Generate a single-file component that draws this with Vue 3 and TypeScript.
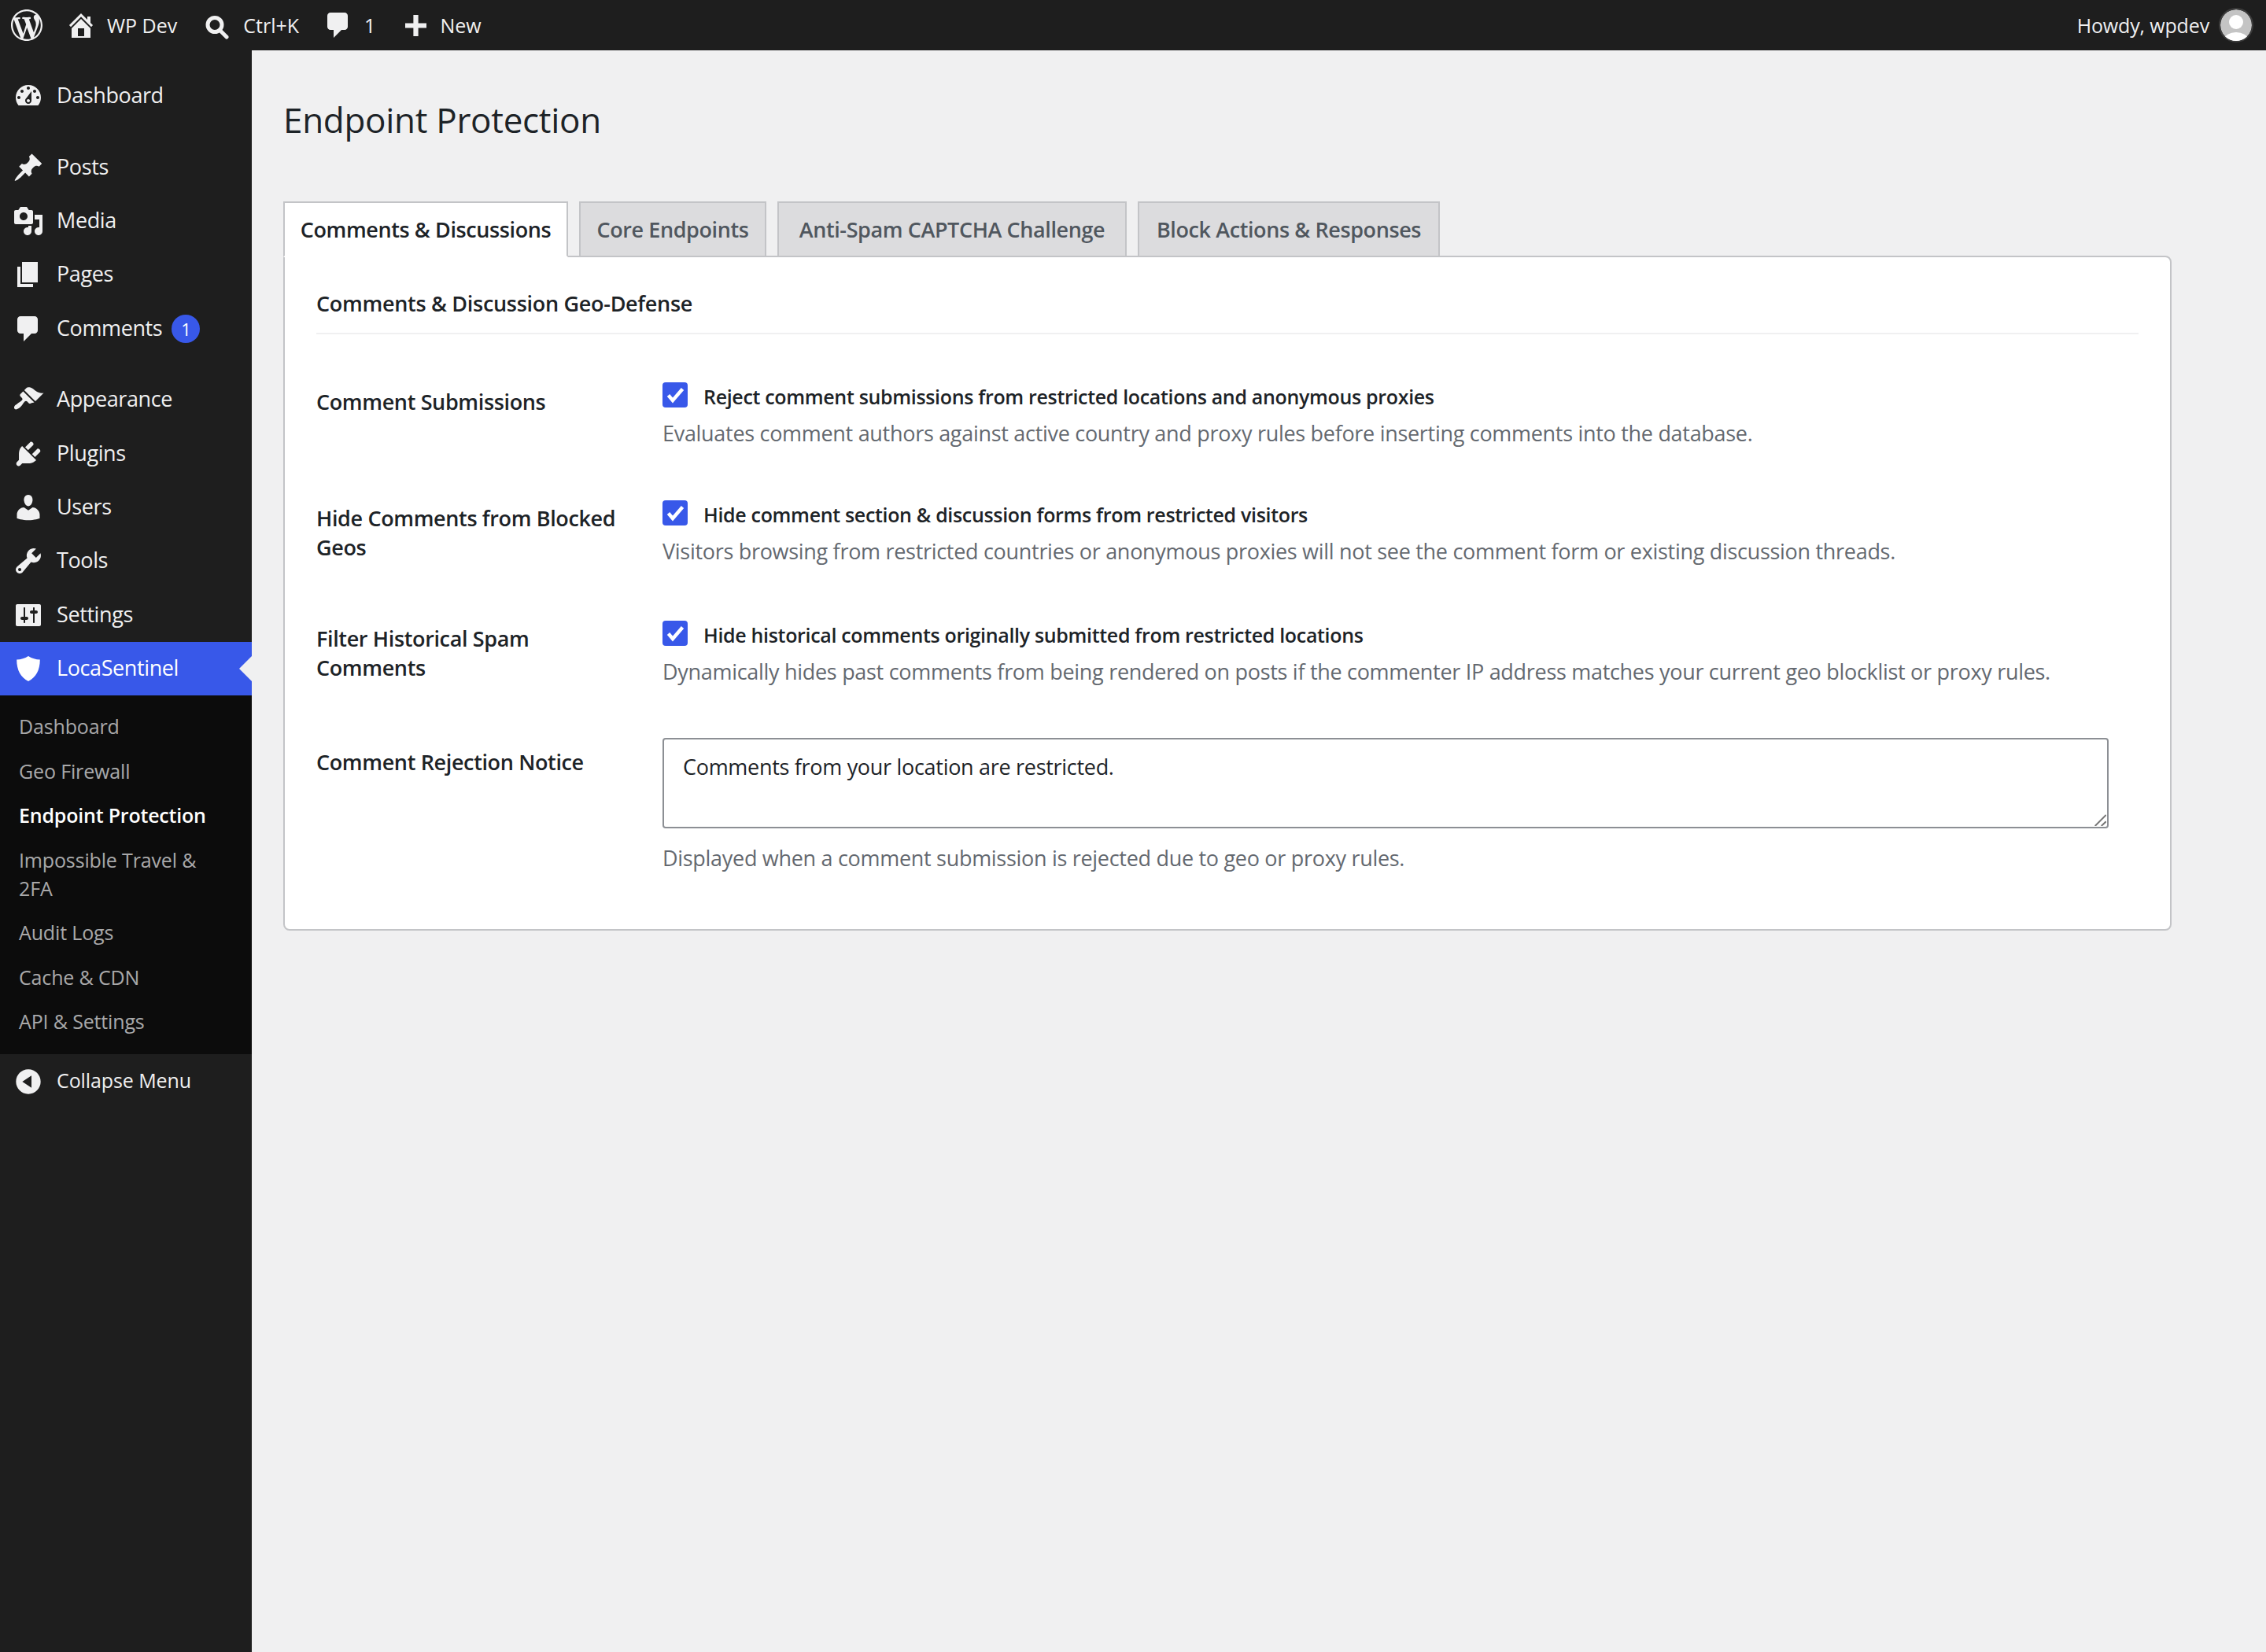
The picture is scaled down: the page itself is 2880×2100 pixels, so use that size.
<script setup lang="ts">
// WP admin screen: LocaSentinel "Endpoint Protection" settings page.
// Everything is doubled from the usual admin sizes (2x capture).

interface MenuItem {
  label: string
  icon: string
  gapBefore?: boolean
  badge?: string
  active?: boolean
}

const ICONS: Record<string, string> = {
  wp: 'M20 10c0-5.51-4.49-10-10-10C4.48 0 0 4.49 0 10c0 5.52 4.48 10 10 10 5.51 0 10-4.48 10-10zM7.78 15.37L4.37 6.22c.55-.02 1.17-.08 1.17-.08.5-.06.44-1.13-.06-1.11 0 0-1.45.11-2.37.11-.18 0-.37 0-.58-.01C4.12 2.69 6.87 1.11 10 1.11c2.33 0 4.45.87 6.05 2.34-.68-.11-1.65.39-1.65 1.58 0 .74.45 1.36.9 2.1.35.61.55 1.36.55 2.46 0 1.49-1.4 5-1.4 5l-3.03-8.37c.54-.02.82-.17.82-.17.5-.05.44-1.25-.06-1.22 0 0-1.44.12-2.38.12-.87 0-2.33-.12-2.33-.12-.5-.03-.56 1.2-.06 1.22l.92.08 1.26 3.41zM17.41 10c.24-.64.74-1.87.43-4.25.7 1.29 1.05 2.71 1.05 4.25 0 3.29-1.73 6.24-4.4 7.78.97-2.59 1.94-5.2 2.92-7.78zM6.1 18.09C3.12 16.65 1.11 13.53 1.11 10c0-1.3.23-2.48.72-3.59C3.25 10.3 4.67 14.2 6.1 18.09zm4.03-6.63l2.58 6.98c-.86.29-1.76.45-2.71.45-.79 0-1.57-.11-2.29-.33.81-2.38 1.62-4.74 2.42-7.1z',
  home: 'M16 8.5l1.53 1.53-1.06 1.06L10 4.62l-6.47 6.47-1.06-1.06L10 2.5l4 4v-2h2v4zm-6-2.46l6 5.99V18H4v-5.97zM12 17v-5H8v5h4z',
  plus: 'M17 7v3h-5v5H9v-5H4V7h5V2h3v5h5z',
  dashboard: 'M3.76 16h12.48c1.1-1.37 1.76-3.11 1.76-5 0-4.42-3.58-8-8-8s-8 3.58-8 8c0 1.89.66 3.63 1.76 5zM10 4c.55 0 1 .45 1 1s-.45 1-1 1-1-.45-1-1 .45-1 1-1zM6 6c.55 0 1 .45 1 1s-.45 1-1 1-1-.45-1-1 .45-1 1-1zm8 0c.55 0 1 .45 1 1s-.45 1-1 1-1-.45-1-1 .45-1 1-1zm-5.37 5.55L12 7v6c0 1.1-.9 2-2 2s-2-.9-2-2c0-.57.24-1.08.63-1.45zM4 10c.55 0 1 .45 1 1s-.45 1-1 1-1-.45-1-1 .45-1 1-1zm12 0c.55 0 1 .45 1 1s-.45 1-1 1-1-.45-1-1 .45-1 1-1zm-5 3c0-.55-.45-1-1-1s-1 .45-1 1 .45 1 1 1 1-.45 1-1z',
  posts: 'M10.44 3.02l1.82-1.82 6.36 6.35-1.83 1.82c-1.05-.68-2.48-.57-3.41.36l-.75.75c-.92.93-1.04 2.35-.35 3.41l-1.83 1.82-2.41-2.41-2.8 2.79c-.42.42-3.38 2.71-3.8 2.29s1.86-3.39 2.28-3.81l2.79-2.79L4.1 9.36l1.83-1.82c1.05.69 2.48.57 3.4-.36l.75-.75c.93-.92 1.05-2.35.36-3.41z',
  media: 'M13 11V4c0-.55-.45-1-1-1h-1.67L9 1H5L3.67 3H2c-.55 0-1 .45-1 1v7c0 .55.45 1 1 1h10c.55 0 1-.45 1-1zM7 4.5c1.38 0 2.5 1.12 2.5 2.5S8.38 9.5 7 9.5 4.5 8.38 4.5 7 5.62 4.5 7 4.5zM14 6h5v10.5c0 1.38-1.12 2.5-2.5 2.5S14 17.88 14 16.5s1.12-2.5 2.5-2.5c.17 0 .34.02.5.05V9h-3V6zm-4 8.05V13h2v3.5c0 1.38-1.12 2.5-2.5 2.5S7 17.88 7 16.5 8.12 14 9.5 14c.17 0 .34.02.5.05z',
  pages: 'M6 15V2h10v13H6zm-1 1h8v2H3V5h2v11z',
  comments: 'M5 2h9c1.1 0 2 .9 2 2v7c0 1.1-.9 2-2 2h-2l-5 5v-5H5c-1.1 0-2-.9-2-2V4c0-1.1.9-2 2-2z',
  appearance: 'M14.48 11.06L7.41 3.99l1.5-1.5c.5-.56 2.3-.47 3.51.32 1.21.8 1.43 1.28 2.91 2.1 1.18.64 2.45 1.26 4.45.85zm-.71.71L6.7 4.7 4.93 6.47c-.39.39-.39 1.02 0 1.41l1.06 1.06c.39.39.39 1.03 0 1.42-.6.6-1.43 1.11-2.21 1.69-.35.26-.7.53-1.01.84C1.43 13.23.4 14.95 1.3 15.85c.9.9 2.62-.13 3.97-1.47.31-.31.58-.66.84-1.01.58-.78 1.09-1.61 1.69-2.21.39-.39 1.02-.39 1.41 0l1.06 1.06c.39.39 1.02.39 1.41 0z',
  plugins: 'M13.11 4.36L9.87 7.6 8 5.73l3.24-3.24c.35-.34 1.05-.2 1.56.32.52.51.66 1.21.31 1.55zm-8 1.77l.91-1.12 9.01 9.01-1.19.84c-.71.71-2.63 1.16-3.82 1.16H6.14L4.9 17.26c-.59.59-1.54.59-2.12 0-.59-.58-.59-1.53 0-2.12l1.24-1.24v-3.88c0-1.13.4-3.19 1.09-3.89zm7.26 3.97l3.24-3.24c.34-.35 1.04-.21 1.55.31.52.51.66 1.21.31 1.55l-3.24 3.25z',
  users: 'M10 9.25c-2.27 0-2.73-3.44-2.73-3.44C7 4.02 7.82 2 9.97 2c2.16 0 2.98 2.02 2.71 3.81 0 0-.41 3.44-2.68 3.44zm0 2.57L12.72 10c2.39 0 4.52 2.33 4.52 4.53v2.49s-3.65 1.13-7.24 1.13c-3.65 0-7.24-1.13-7.24-1.13v-2.49c0-2.25 1.94-4.48 4.47-4.48z',
  tools: 'M16.68 9.77c-1.34 1.34-3.3 1.67-4.95.99l-5.41 6.52c-.99.99-2.59.99-3.58 0s-.99-2.59 0-3.57l6.52-5.42c-.68-1.65-.35-3.61.99-4.95 1.28-1.28 3.12-1.62 4.72-1.06l-2.89 2.89 2.82 2.82 2.86-2.87c.53 1.58.18 3.39-1.08 4.65zM3.81 16.21c.4.39 1.04.39 1.43 0 .4-.4.4-1.04 0-1.43-.39-.4-1.03-.4-1.43 0-.39.39-.39 1.03 0 1.43z',
  settings: 'M18 16V4c0-.55-.45-1-1-1H3c-.55 0-1 .45-1 1v12c0 .55.45 1 1 1h14c.55 0 1-.45 1-1zM8 11h1c.55 0 1 .45 1 1s-.45 1-1 1H8v1.5c0 .28-.22.5-.5.5s-.5-.22-.5-.5V13H6c-.55 0-1-.45-1-1s.45-1 1-1h1V5.5c0-.28.22-.5.5-.5s.5.22.5.5V11zm5-2h-1c-.55 0-1-.45-1-1s.45-1 1-1h1V5.5c0-.28.22-.5.5-.5s.5.22.5.5V7h1c.55 0 1 .45 1 1s-.45 1-1 1h-1v5.5c0 .28-.22.5-.5.5s-.5-.22-.5-.5V9z',
  shield: 'M10 2c2.2 1.5 4.8 2.2 7.4 2.3 0 6.8-2.6 11.4-7.4 13.7C5.2 15.7 2.6 11.1 2.6 4.3 5.2 4.2 7.8 3.5 10 2z',
  collapse: 'M10 2.16c4.33 0 7.84 3.51 7.84 7.84s-3.51 7.84-7.84 7.84S2.16 14.33 2.16 10 5.71 2.16 10 2.16zm2 11.72V6.12L6.18 9.97z',
}

const menu: MenuItem[] = [
  { label: 'Dashboard', icon: 'dashboard' },
  { label: 'Posts', icon: 'posts', gapBefore: true },
  { label: 'Media', icon: 'media' },
  { label: 'Pages', icon: 'pages' },
  { label: 'Comments', icon: 'comments', badge: '1' },
  { label: 'Appearance', icon: 'appearance', gapBefore: true },
  { label: 'Plugins', icon: 'plugins' },
  { label: 'Users', icon: 'users' },
  { label: 'Tools', icon: 'tools' },
  { label: 'Settings', icon: 'settings' },
  { label: 'LocaSentinel', icon: 'shield', active: true },
]

const subMenu = [
  { label: 'Dashboard' },
  { label: 'Geo Firewall' },
  { label: 'Endpoint Protection', current: true },
  { label: 'Impossible Travel & 2FA' },
  { label: 'Audit Logs' },
  { label: 'Cache & CDN' },
  { label: 'API & Settings' },
]

// widths fixed per tab: the substitute font runs a little narrow on the capitals
const tabs = [
  { label: 'Comments & Discussions', width: 362 },
  { label: 'Core Endpoints', width: 238 },
  { label: 'Anti-Spam CAPTCHA Challenge', width: 444 },
  { label: 'Block Actions & Responses', width: 384 },
]

const checkRows = [
  {
    label: 'Comment Submissions',
    check: 'Reject comment submissions from restricted locations and anonymous proxies',
    desc: 'Evaluates comment authors against active country and proxy rules before inserting comments into the database.',
    labelTop: 6,
    gapBelow: 37,
  },
  {
    label: 'Hide Comments from Blocked Geos',
    check: 'Hide comment section & discussion forms from restricted visitors',
    desc: 'Visitors browsing from restricted countries or anonymous proxies will not see the comment form or existing discussion threads.',
    labelTop: 4,
    gapBelow: 40,
  },
  {
    label: 'Filter Historical Spam Comments',
    check: 'Hide historical comments originally submitted from restricted locations',
    desc: 'Dynamically hides past comments from being rendered on posts if the commenter IP address matches your current geo blocklist or proxy rules.',
    labelTop: 4,
    gapBelow: 36,
  },
]
</script>

<template>
  <div class="admin">
    <header class="bar">
      <svg class="bar-logo" viewBox="0 0 20 20"><path :d="ICONS.wp" /></svg>
      <svg class="bar-home" viewBox="0 0 20 20"><path :d="ICONS.home" /></svg>
      <span class="bar-site">WP Dev</span>
      <svg class="bar-search" viewBox="0 0 30 36">
        <circle cx="12" cy="17.5" r="9" fill="none" stroke="#f0f0f1" stroke-width="5" />
        <path d="M19 25l8 8" fill="none" stroke="#f0f0f1" stroke-width="5" stroke-linecap="round" />
      </svg>
      <span class="bar-keys">Ctrl+K</span>
      <svg class="bar-comment" viewBox="0 0 20 20"><path :d="ICONS.comments" /></svg>
      <span class="bar-count">1</span>
      <svg class="bar-plus" viewBox="4 2 13 13"><path :d="ICONS.plus" /></svg>
      <span class="bar-new">New</span>
      <span class="bar-howdy">Howdy, wpdev</span>
      <span class="bar-avatar">
        <svg viewBox="0 0 40 40">
          <circle cx="20" cy="20" r="20" fill="#c4c4c4" />
          <circle cx="20" cy="16" r="9" fill="#fff" />
          <ellipse cx="20" cy="38" rx="15" ry="9" fill="#fff" />
        </svg>
      </span>
    </header>

    <div class="body">
      <nav class="side">
        <template v-for="item in menu" :key="item.label">
          <div class="menu-item" :class="{ 'menu-gap': item.gapBefore, 'menu-active': item.active }">
            <svg class="menu-icon" viewBox="0 0 20 20"><path :d="ICONS[item.icon]" /></svg>
            <span class="menu-text">{{ item.label }}</span>
            <span v-if="item.badge" class="menu-badge">{{ item.badge }}</span>
          </div>
        </template>
        <ul class="sub">
          <li v-for="s in subMenu" :key="s.label" :class="{ 'sub-current': s.current }">{{ s.label }}</li>
        </ul>
        <div class="menu-item collapse">
          <svg class="menu-icon" viewBox="0 0 20 20"><path :d="ICONS.collapse" /></svg>
          <span class="menu-text">Collapse Menu</span>
        </div>
      </nav>

      <main class="main">
        <h1 class="title">Endpoint Protection</h1>
        <div class="tabs">
          <div
            v-for="(t, i) in tabs"
            :key="t.label"
            class="tab"
            :class="{ 'tab-active': i === 0 }"
            :style="{ width: t.width + 'px' }"
          >
            {{ t.label }}
          </div>
        </div>
        <section class="panel">
          <h2 class="panel-title">Comments &amp; Discussion Geo-Defense</h2>

          <div v-for="r in checkRows" :key="r.label" class="row" :style="{ paddingBottom: r.gapBelow + 'px' }">
            <div class="row-label" :style="{ paddingTop: r.labelTop + 'px' }">{{ r.label }}</div>
            <div class="row-field">
              <div class="check-line">
                <span class="check">
                  <svg viewBox="0 0 32 32"><path d="M7.5 16.5l5.5 6.5L25.5 8.5" fill="none" stroke="#fff" stroke-width="4.4" /></svg>
                </span>
                <span class="check-text">{{ r.check }}</span>
              </div>
              <p class="desc">{{ r.desc }}</p>
            </div>
          </div>

          <div class="row row-last">
            <div class="row-label notice-label">Comment Rejection Notice</div>
            <div class="row-field">
              <div class="notice-box">
                <textarea class="notice" readonly>Comments from your location are restricted.</textarea>
                <svg class="grip" viewBox="0 0 18 18">
                  <path d="M3.7 18L17.7 4M11.7 18l6-5.7" fill="none" stroke="#777" stroke-width="2" />
                </svg>
              </div>
              <p class="desc notice-desc">Displayed when a comment submission is rejected due to geo or proxy rules.</p>
            </div>
          </div>
        </section>
      </main>
    </div>
  </div>
</template>

<style scoped>
.admin {
  width: 2880px;
  height: 2100px;
  overflow: hidden;
  display: flex;
  flex-direction: column;
  background: #f0f0f1;
  color: #1d2327;
  font-family: 'Open Sans', 'Noto Sans', sans-serif;
  font-size: 27px;
  letter-spacing: -0.3px;
}

/* top bar */
.bar {
  height: 64px;
  flex: none;
  display: flex;
  align-items: center;
  background: #1e1e1e;
  color: #f0f0f1;
  font-size: 25px;
  letter-spacing: 0;
  padding: 0 16px 0 14px;
}
.bar svg {
  display: block;
  fill: #f0f0f1;
  flex: none;
}
.bar-logo {
  width: 40px;
  height: 40px;
}
.bar-home {
  width: 40px;
  height: 40px;
  margin-left: 29px;
}
.bar-site {
  margin-left: 13px;
}
.bar-search {
  width: 30px;
  height: 36px;
  margin-left: 36px;
}
.bar-keys {
  margin-left: 18px;
}
.bar-comment {
  width: 40px;
  height: 40px;
  margin-left: 30px;
}
.bar-count {
  margin-left: 13px;
}
.bar-plus {
  width: 27px;
  height: 27px;
  margin-left: 38px;
}
.bar-new {
  margin-left: 17px;
}
.bar-howdy {
  margin-left: auto;
  letter-spacing: -0.15px;
}
.bar-avatar {
  width: 44px;
  height: 44px;
  margin-left: 12px;
  border: 2px solid #3c3c3c;
  border-radius: 50%;
  box-sizing: border-box;
  overflow: hidden;
}

.body {
  flex: 1;
  display: flex;
  min-height: 0;
}

/* left menu */
.side {
  width: 320px;
  flex: none;
  background: #1e1e1e;
  color: #f0f0f1;
  padding-top: 24px;
}
.menu-item {
  position: relative;
  display: flex;
  align-items: center;
  height: 68.4px;
  padding-left: 16px;
  box-sizing: border-box;
}
.menu-gap {
  margin-top: 22px;
}
.menu-icon {
  width: 40px;
  height: 40px;
  flex: none;
  margin-right: 16px;
  fill: #f0f0f1;
}
.menu-text {
  padding-bottom: 3px;
  letter-spacing: -0.4px;
}
.menu-badge {
  width: 36px;
  height: 36px;
  margin-left: 12px;
  border-radius: 50%;
  background: #3858e9;
  color: #fff;
  font-size: 22px;
  line-height: 36px;
  text-align: center;
}
.menu-active {
  background: #3858e9;
  color: #fff;
}
.menu-active .menu-icon {
  fill: #fff;
}
.menu-active::after {
  content: '';
  position: absolute;
  right: 0;
  top: 18px;
  border: 16px solid transparent;
  border-left-width: 0;
  border-right-color: #f0f0f1;
}
.sub {
  list-style: none;
  margin: 0;
  padding: 11px 0 13px;
  background: #0c0c0c;
  color: rgba(240, 240, 241, 0.7);
  font-size: 25px;
  letter-spacing: -0.15px;
  line-height: 36.4px;
}
.sub li {
  padding: 10px 44px 10px 24px;
}
.sub-current {
  color: #fff;
  font-weight: 600;
  letter-spacing: -0.2px;
}
.collapse {
  height: 70px;
  font-size: 25px;
}
.collapse .menu-text {
  letter-spacing: -0.1px;
}

/* page */
.main {
  flex: 1;
  min-width: 0;
  padding: 58px 0 0 40px;
}
.title {
  margin: 0 0 74px;
  font-size: 44px;
  font-weight: 400;
  line-height: 60px;
}
.tabs {
  display: flex;
  gap: 14px;
  width: 2400px;
  margin-bottom: -2px;
  position: relative;
}
.tab {
  height: 71px;
  box-sizing: border-box;
  border: 2px solid #c3c4c7;
  background: #dcdcde;
  color: #50575e;
  font-weight: 600;
  letter-spacing: -0.4px;
  line-height: 68px;
  text-align: center;
  white-space: nowrap;
}
.tab-active {
  background: #fff;
  color: #1d2327;
  border-bottom-color: #fff;
}
.panel {
  width: 2400px;
  box-sizing: border-box;
  background: #fff;
  border: 2px solid #c3c4c7;
  border-radius: 0 8px 8px 8px;
  padding: 40px 40px 42px;
}
.panel-title {
  margin: 0 0 31px;
  padding-bottom: 18px;
  border-bottom: 2px solid #f0f0f1;
  font-size: 27px;
  font-weight: 600;
  letter-spacing: -0.3px;
  line-height: 38px;
}
.row {
  display: flex;
  padding-top: 30px;
}
.row-label {
  width: 440px;
  flex: none;
  box-sizing: border-box;
  padding-right: 40px;
  font-weight: 600;
  letter-spacing: -0.36px;
  line-height: 37px;
}
.row-field {
  flex: 1;
  min-width: 0;
  padding-right: 38px;
}
.check-line {
  display: flex;
  align-items: flex-start;
}
.check {
  width: 32px;
  height: 32px;
  flex: none;
  border-radius: 4px;
  background: #3858e9;
}
.check svg {
  display: block;
}
.check-text {
  margin-left: 20px;
  font-size: 25px;
  font-weight: 600;
  letter-spacing: -0.33px;
  line-height: 36px;
}
.desc {
  margin: 11px 0 0;
  color: #646970;
  line-height: 36px;
}
.row-last {
  padding-bottom: 30px;
}
.notice-label {
  padding-top: 12px;
}
.notice-box {
  position: relative;
}
.notice {
  display: block;
  width: 100%;
  height: 115px;
  box-sizing: border-box;
  padding: 17px 24px 10px;
  border: 2px solid #8c8f94;
  border-radius: 4px;
  background: #fff;
  color: #1d2327;
  font: inherit;
  letter-spacing: inherit;
  line-height: 36px;
  resize: none;
  outline: none;
}
.grip {
  position: absolute;
  right: 3px;
  bottom: 3px;
  width: 18px;
  height: 18px;
}
.notice-desc {
  margin-top: 20px;
}
</style>

<style>
html,
body {
  margin: 0;
  background: #f0f0f1;
}
</style>
